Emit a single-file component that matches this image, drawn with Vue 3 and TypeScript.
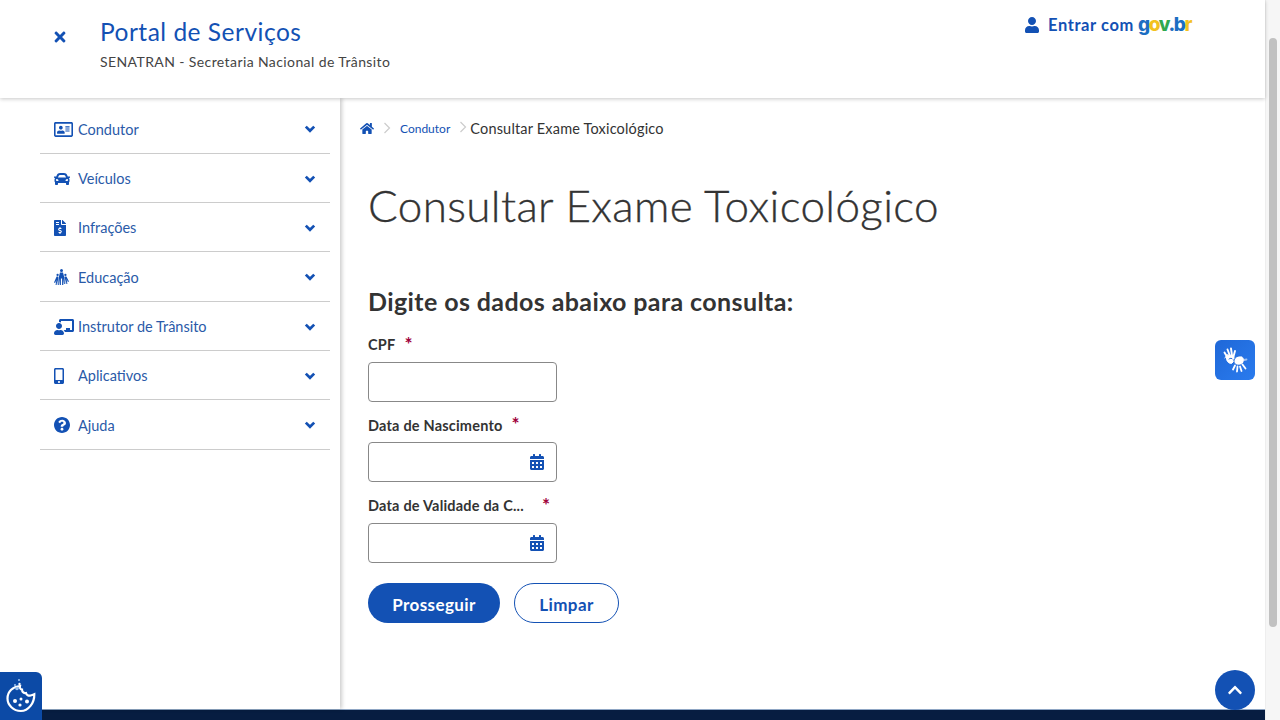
<script setup lang="ts">
interface NavItem { label: string; vb: string; w: number; h: number; d: string }

const calendar = 'M0 464c0 26.5 21.5 48 48 48h352c26.5 0 48-21.5 48-48V192H0v272zm320-196c0-6.6 5.4-12 12-12h40c6.6 0 12 5.4 12 12v40c0 6.6-5.4 12-12 12h-40c-6.6 0-12-5.4-12-12v-40zm0 128c0-6.6 5.4-12 12-12h40c6.6 0 12 5.4 12 12v40c0 6.6-5.4 12-12 12h-40c-6.6 0-12-5.4-12-12v-40zM192 268c0-6.6 5.4-12 12-12h40c6.6 0 12 5.4 12 12v40c0 6.6-5.4 12-12 12h-40c-6.6 0-12-5.4-12-12v-40zm0 128c0-6.6 5.4-12 12-12h40c6.6 0 12 5.4 12 12v40c0 6.6-5.4 12-12 12h-40c-6.6 0-12-5.4-12-12v-40zM64 268c0-6.6 5.4-12 12-12h40c6.6 0 12 5.4 12 12v40c0 6.6-5.4 12-12 12H76c-6.6 0-12-5.4-12-12v-40zm0 128c0-6.6 5.4-12 12-12h40c6.6 0 12 5.4 12 12v40c0 6.6-5.4 12-12 12H76c-6.6 0-12-5.4-12-12v-40zM400 64h-48V16c0-8.8-7.2-16-16-16h-32c-8.8 0-16 7.2-16 16v48H160V16c0-8.8-7.2-16-16-16h-32c-8.8 0-16 7.2-16 16v48H48C21.5 64 0 85.5 0 112v48h448v-48c0-26.5-21.5-48-48-48z'

const items: NavItem[] = [
  { label: 'Condutor', vb: '0 0 576 448', w: 19, h: 15, d: 'M528 0H48C21.5 0 0 21.5 0 48v352c0 26.5 21.5 48 48 48h480c26.5 0 48-21.5 48-48V48c0-26.5-21.5-48-48-48zm0 400H48V48h480v352zM208 224c30.9 0 56-25.1 56-56s-25.1-56-56-56-56 25.1-56 56 25.1 56 56 56zm-96 128h192c11 0 20-8 20-18v-20c0-33-31-60-70-60-12 0-20 8-46 8s-34-8-46-8c-39 0-70 27-70 60v20c0 10 9 18 20 18zm240-64h112c4 0 8-4 8-8v-16c0-4-4-8-8-8H352c-4 0-8 4-8 8v16c0 4 4 8 8 8zm0-64h112c4 0 8-4 8-8v-16c0-4-4-8-8-8H352c-4 0-8 4-8 8v16c0 4 4 8 8 8zm0-64h112c4 0 8-4 8-8v-16c0-4-4-8-8-8H352c-4 0-8 4-8 8v16c0 4 4 8 8 8z' },
  { label: 'Veículos', vb: '0 64 512 384', w: 16, h: 12, d: 'M499.99 176h-59.87l-16.64-41.6C406.38 91.63 365.57 64 319.5 64h-127c-46.06 0-86.88 27.63-103.99 70.4L71.87 176H12.01C4.2 176-1.53 183.34.37 190.91l6 24C7.7 220.25 12.5 224 18.01 224h20.07C24.65 235.73 16 252.78 16 272v48c0 16.12 6.16 30.67 16 41.93V416c0 17.67 14.33 32 32 32h32c17.67 0 32-14.33 32-32v-32h256v32c0 17.67 14.33 32 32 32h32c17.67 0 32-14.33 32-32v-54.07c9.84-11.25 16-25.8 16-41.93v-48c0-19.22-8.65-36.27-22.07-48H494c5.51 0 10.31-3.75 11.64-9.09l6-24c1.89-7.57-3.84-14.91-11.65-14.91zm-352.06-17.83c7.29-18.22 24.94-30.17 44.57-30.17h127c19.63 0 37.28 11.95 44.57 30.17L384 208H128l19.93-49.83zM96 319.8c-19.2 0-32-12.76-32-31.9S76.8 256 96 256s48 28.71 48 47.85-28.8 15.95-48 15.95zm320 0c-19.2 0-48 3.19-48-15.95S396.8 256 416 256s32 12.76 32 31.9-12.8 31.9-32 31.9z' },
  { label: 'Infrações', vb: '0 0 384 512', w: 12, h: 16, d: 'M377 105L279.1 7c-4.5-4.5-10.6-7-17-7H256v128h128v-6.1c0-6.3-2.5-12.4-7-16.9zm-153 31V0H24C10.7 0 0 10.7 0 24v464c0 13.3 10.7 24 24 24h336c13.3 0 24-10.7 24-24V160H248c-13.2 0-24-10.8-24-24zM64 72c0-4.42 3.58-8 8-8h80c4.42 0 8 3.58 8 8v16c0 4.42-3.58 8-8 8H72c-4.42 0-8-3.58-8-8V72zm0 80v-16c0-4.42 3.58-8 8-8h80c4.42 0 8 3.58 8 8v16c0 4.42-3.58 8-8 8H72c-4.42 0-8-3.58-8-8zm144 263.88V440c0 4.42-3.58 8-8 8h-16c-4.42 0-8-3.58-8-8v-24.29c-11.29-.58-22.27-4.52-31.37-11.35-3.9-2.93-4.1-8.77-.57-12.14l11.75-11.21c2.77-2.64 6.89-2.76 10.13-.73 3.87 2.42 8.26 3.72 12.82 3.72h28.11c6.5 0 11.8-5.92 11.8-13.19 0-5.95-3.61-11.19-8.77-12.73l-45-13.5c-18.59-5.58-31.58-23.42-31.58-43.39 0-24.52 19.05-44.44 42.67-45.07V232c0-4.42 3.58-8 8-8h16c4.42 0 8 3.58 8 8v24.29c11.29.58 22.27 4.51 31.37 11.35 3.9 2.93 4.1 8.77.57 12.14l-11.75 11.21c-2.77 2.64-6.89 2.76-10.13.73-3.87-2.43-8.26-3.72-12.82-3.72h-28.11c-6.5 0-11.8 5.92-11.8 13.19 0 5.95 3.61 11.19 8.77 12.73l45 13.5c18.59 5.58 31.58 23.42 31.58 43.39 0 24.53-19.05 44.44-42.67 45.07z' },
  { label: 'Educação', vb: '0 0 15 16', w: 15, h: 16, d: 'M7.500 0a1.500 1.500 0 1 1 0 3 1.500 1.500 0 0 1 0-3zM6 3.500h3l1.200 4.500-1 8H8.100V9.500h-1.200V16H5.800l-1-8zM3.600 4.800a1.150 1.150 0 1 1 0 2.300 1.150 1.150 0 0 1 0-2.300zM2.600 7.500h1.500L4.500 9l.3 7h-1l-.4-5-.8 5H1.600l.8-5-1.300 3-1.100-.5zM11.400 4.800a1.150 1.150 0 1 1 0 2.300 1.150 1.150 0 0 1 0-2.300zM10.900 7.500h1.500l2.600 5-1.100.5-1.300-3 .8 5h-1l-.8-5-.4 5h-1l.3-7z' },
  { label: 'Instrutor de Trânsito', vb: '0 0 640 512', w: 20, h: 16, d: 'M208 352c-2.39 0-4.78.35-7.06 1.09C187.98 357.3 174.35 360 160 360c-14.35 0-27.98-2.7-40.95-6.91-2.28-.74-4.66-1.09-7.05-1.09C49.94 352-.33 402.48 0 464.62.14 490.88 21.73 512 48 512h224c26.27 0 47.86-21.12 48-47.38.33-62.14-49.94-112.62-112-112.62zm-48-32c53.02 0 96-42.98 96-96s-42.98-96-96-96-96 42.98-96 96 42.98 96 96 96zM592 0H208c-26.47 0-48 22.25-48 49.59V96c23.42 0 45.1 6.78 64 17.8V64h352v288h-64v-64H384v64h-76.24c19.1 16.69 33.12 38.73 39.69 64H592c26.47 0 48-22.25 48-49.59V49.59C640 22.25 618.47 0 592 0z' },
  { label: 'Aplicativos', vb: '0 0 320 512', w: 10, h: 16, d: 'M272 0H48C21.5 0 0 21.5 0 48v416c0 26.5 21.5 48 48 48h224c26.5 0 48-21.5 48-48V48c0-26.5-21.5-48-48-48zM160 480c-17.7 0-32-14.3-32-32s14.3-32 32-32 32 14.3 32 32-14.3 32-32 32zm112-108c0 6.6-5.4 12-12 12H60c-6.6 0-12-5.4-12-12V60c0-6.6 5.4-12 12-12h200c6.6 0 12 5.4 12 12v312z' },
  { label: 'Ajuda', vb: '8 8 496 496', w: 16, h: 16, d: 'M504 256c0 136.997-111.043 248-248 248S8 392.997 8 256C8 119.083 119.043 8 256 8s248 111.083 248 248zM262.655 90c-54.497 0-89.255 22.957-116.549 63.758-3.536 5.286-2.353 12.415 2.715 16.258l34.699 26.31c5.205 3.947 12.621 3.008 16.665-2.122 17.864-22.658 30.113-35.797 57.303-35.797 20.429 0 45.698 13.148 45.698 32.958 0 14.976-12.363 22.667-32.534 33.976C247.128 238.528 216 254.941 216 296v4c0 6.627 5.373 12 12 12h56c6.627 0 12-5.373 12-12v-1.333c0-28.462 83.186-29.647 83.186-106.667 0-58.002-60.165-102-116.531-102zM256 338c-25.365 0-46 20.635-46 46 0 25.364 20.635 46 46 46s46-20.636 46-46c0-25.365-20.635-46-46-46z' }
]
</script>

<template>
  <div class="page">
    <div class="viewport">
      <header class="top">
        <button class="close" aria-label="Fechar">
          <svg width="12" height="16" viewBox="0 0 352 512"><path fill="#1351b4" d="M242.72 256l100.07-100.07c12.28-12.28 12.28-32.19 0-44.48l-22.24-22.24c-12.28-12.28-32.19-12.28-44.48 0L176 189.28 75.93 89.21c-12.28-12.28-32.19-12.28-44.48 0L9.21 111.45c-12.28 12.28-12.28 32.19 0 44.48L109.28 256 9.21 356.07c-12.28 12.28-12.28 32.19 0 44.48l22.24 22.24c12.28 12.28 32.2 12.28 44.48 0L176 322.72l100.07 100.07c12.28 12.28 32.2 12.28 44.48 0l22.24-22.24c12.28-12.28 12.28-32.19 0-44.48L242.72 256z"/></svg>
        </button>
        <div class="brand">
          <div class="brand-title">Portal de Serviços</div>
          <div class="brand-sub">SENATRAN - Secretaria Nacional de Trânsito</div>
        </div>
        <div class="login">
          <svg width="14" height="16" viewBox="0 0 448 512"><path fill="#1351b4" d="M224 256c70.7 0 128-57.3 128-128S294.7 0 224 0 96 57.3 96 128s57.3 128 128 128zm89.6 32h-16.7c-22.2 10.2-46.9 16-72.9 16s-50.6-5.8-72.9-16h-16.7C60.2 288 0 348.2 0 422.4V464c0 26.5 21.5 48 48 48h352c26.5 0 48-21.5 48-48v-41.6c0-74.2-60.2-134.4-134.4-134.4z"/></svg>
          <span class="login-text">Entrar com</span>
          <span class="gov"><i class="g1">g</i><i class="g2">o</i><i class="g3">v</i><i class="g1">.</i><i class="g1">b</i><i class="g2">r</i></span>
        </div>
      </header>

      <div class="body">
        <aside class="side">
          <nav>
            <a v-for="it in items" :key="it.label" class="nav-row">
              <span class="nav-icon">
                <svg :width="it.w" :height="it.h" :viewBox="it.vb"><path fill="#1351b4" :d="it.d"/></svg>
              </span>
              <span class="nav-label">{{ it.label }}</span>
              <svg class="chev" width="12" height="8" viewBox="0 0 12 8"><path d="M1.800 1.600L6 5.800l4.200-4.200" fill="none" stroke="#1351b4" stroke-width="2.700"/></svg>
            </a>
          </nav>
        </aside>

        <main class="main">
          <div class="crumbs">
            <svg width="14" height="13" viewBox="0 0 576 512"><path fill="#1351b4" d="M280.37 148.26L96 300.11V464a16 16 0 0 0 16 16l112.06-.29a16 16 0 0 0 15.92-16V368a16 16 0 0 1 16-16h64a16 16 0 0 1 16 16v95.64a16 16 0 0 0 16 16.05L464 480a16 16 0 0 0 16-16V300L295.67 148.26a12.19 12.19 0 0 0-15.3 0zM571.6 251.47L488 182.56V44.05a12 12 0 0 0-12-12h-56a12 12 0 0 0-12 12v72.61L318.47 43a48 48 0 0 0-61 0L4.34 251.47a12 12 0 0 0-1.6 16.9l25.5 31A12 12 0 0 0 45.15 301l235.22-193.74a12.19 12.19 0 0 1 15.3 0L530.9 301a12 12 0 0 0 16.9-1.6l25.5-31a12 12 0 0 0-1.7-16.93z"/></svg>
            <svg class="sep" width="8" height="12" viewBox="0 0 8 12"><path d="M1.500 1l5 5-5 5" fill="none" stroke="#ccc" stroke-width="1.200"/></svg>
            <span class="crumb-link">Condutor</span>
            <svg class="sep2" width="8" height="12" viewBox="0 0 8 12"><path d="M1.500 1l5 5-5 5" fill="none" stroke="#ccc" stroke-width="1.200"/></svg>
            <span class="crumb-cur">Consultar Exame Toxicológico</span>
          </div>

          <h1>Consultar Exame Toxicológico</h1>
          <h2>Digite os dados abaixo para consulta:</h2>

          <form class="form" @submit.prevent>
            <div class="field">
              <div class="label-row"><label class="lbl">CPF</label><span class="req req-cpf">*</span></div>
              <div class="input"></div>
            </div>
            <div class="field">
              <div class="label-row"><label class="lbl">Data de Nascimento</label><span class="req req-nasc">*</span></div>
              <div class="input">
                <svg width="14" height="16" viewBox="0 0 448 512"><path fill="#1351b4" :d="calendar"/></svg>
              </div>
            </div>
            <div class="field">
              <div class="label-row"><label class="lbl">Data de Validade da C...</label><span class="req req-val">*</span></div>
              <div class="input">
                <svg width="14" height="16" viewBox="0 0 448 512"><path fill="#1351b4" :d="calendar"/></svg>
              </div>
            </div>
            <div class="actions">
              <button class="btn primary" type="submit">Prosseguir</button>
              <button class="btn ghost" type="button">Limpar</button>
            </div>
          </form>
        </main>
      </div>

      <footer class="foot"></footer>

      <button class="libras" aria-label="Libras">
        <svg width="26" height="28" viewBox="0 0 26 28" fill="none" stroke="#fff" stroke-linecap="round">
          <path d="M2.500 6.500l3 5M5.500 3.500l2.500 6.500M9 2.500l1 7M13 5l-1.500 5.500" stroke-width="1.900"/>
          <path d="M4.500 11c-.5 3.500 1.500 6.500 5 6.500l3-3-1-5-6-.5z" fill="#fff" stroke-width="1"/>
          <path d="M5 8.500L3 12" stroke-width="1"/>
          <path d="M7 13c1-1 3-1 3.500 0" stroke="#1f68d8" stroke-width="1"/>
          <path d="M12 14c1-3 4-4.500 7.500-4l2.500 2c1 3.500-1 6.500-4.500 7-3 .5-6-1-5.500-5z" fill="#fff" stroke="#1f68d8" stroke-width=".8"/>
          <path d="M13 19.500l-2 4M15.500 20.500l-.5 5M18 20.500l1.500 4.500M20.500 18.500l3 4" stroke-width="1.800"/>
          <path d="M22 14l2.500-.5" stroke-width="1.800" stroke-opacity=".55"/>
        </svg>
      </button>

      <button class="cookie" aria-label="Cookies">
        <svg width="30" height="36" viewBox="0 0 30 36" fill="none">
          <path d="M14 8c-.5 2 .5 3.500 2 3.500 0 2.500 2 4 4 3.500.5 2 2.500 3 4.500 2.500 1.500-.3 2.500-.7 3.800-1.300C28.500 25 22.500 33 14.800 33 7.500 33 1.500 27 1.500 20.500 1.500 13.500 7 8.500 14 8z" stroke="#fff" stroke-width="2.200"/>
          <circle cx="9" cy="23" r="2" fill="#fff"/><circle cx="15" cy="21" r="1.500" fill="#fff"/><circle cx="21" cy="23.500" r="2" fill="#fff"/><circle cx="14" cy="27" r="1.600" fill="#fff"/>
          <circle cx="11" cy="10.500" r="1.800" fill="#9fc4f0"/><circle cx="13.500" cy="6" r="1.200" fill="#fff"/><circle cx="9" cy="7" r="1" fill="#9fc4f0"/><circle cx="13" cy="2" r="1" fill="#9fc4f0"/>
        </svg>
      </button>

      <button class="totop" aria-label="Topo">
        <svg width="14" height="16" viewBox="0 0 448 512"><path fill="#fff" d="M240.971 130.524l194.343 194.343c9.373 9.373 9.373 24.569 0 33.941l-22.667 22.667c-9.357 9.357-24.522 9.375-33.901.04L224 227.495 69.255 381.516c-9.379 9.335-24.544 9.317-33.901-.04l-22.667-22.667c-9.373-9.373-9.373-24.569 0-33.941L207.03 130.525c9.372-9.373 24.568-9.373 33.941-.001z"/></svg>
      </button>
    </div>

    <div class="scrollbar"><div class="thumb"></div></div>
  </div>
</template>

<style>
html, body { margin: 0; padding: 0; overflow: hidden; background: #fff; }
</style>

<style scoped>
.page { display: flex; height: 720px; width: 1280px; overflow: hidden; font-family: Lato, "Open Sans", sans-serif; color: #333; }
.viewport { position: relative; flex: 1; min-width: 0; display: flex; flex-direction: column; }
.scrollbar { width: 15px; background: #f6f6f6; border-left: 1px solid #eee; box-sizing: border-box; padding: 38px 3px 0 3px; }
.thumb { height: 589px; background: #c1c1c1; border-radius: 5px; }

.top { position: relative; z-index: 2; height: 98px; flex: none; background: #fff; box-shadow: 0 1px 4px rgba(0,0,0,.22); display: flex; align-items: flex-start; box-sizing: border-box; padding-left: 54px; }
.close { border: 0; background: none; padding: 0; width: 46px; margin-top: 29px; text-align: left; height: 16px; line-height: 16px; }
.brand { padding-top: 16px; }
.brand-title { font-size: 24.500px; line-height: 32px; color: #1351b4; letter-spacing: .5px; }
.brand-sub { font-size: 14px; line-height: 20px; margin-top: 4px; color: #444; letter-spacing: .4px; }
.login { margin-left: auto; margin-right: 74px; margin-top: 13px; display: flex; align-items: center; height: 24px; }
.login-text { font-size: 16.500px; font-weight: 700; color: #1351b4; margin-left: 9px; white-space: nowrap; letter-spacing: .6px; }
.gov { font-family: Inter, Lato, sans-serif; font-size: 19px; font-weight: 800; margin-left: 4px; letter-spacing: -1.400px; position: relative; top: -1px; }
.gov i { font-style: normal; }
.g1 { color: #1b6ec2; }
.g2 { color: #f3c21f; }
.g3 { color: #2fa84f; }

.body { flex: 1; min-height: 0; display: flex; }
.side { position: relative; z-index: 1; width: 340px; flex: none; box-sizing: border-box; padding: 6.500px 10px 0 40px; box-shadow: 2px 0 4px rgba(0,0,0,.2); background: #fff; }
.nav-row { display: flex; align-items: center; height: 49.300px; box-sizing: border-box; border-bottom: 1px solid #ccc; padding: 1.500px 14px 0 14px; color: #1351b4; font-size: 14.500px; }
.nav-icon { width: 24px; flex: none; display: flex; align-items: center; }
.nav-label { flex: 1; color: #2a5aa8; }
.chev { flex: none; }

.main { flex: 1; min-width: 0; padding-left: 20px; }
.crumbs { display: flex; align-items: center; height: 60px; font-size: 14.500px; }
.sep { margin: 0 9px 0 9px; }
.crumb-link { font-size: 12px; color: #1351b4; }
.sep2 { margin: 0 3px 0 9px; position: relative; top: -1px; }
.crumb-cur { color: #333; letter-spacing: .18px; }
h1 { margin: 0 0 0 8px; padding-top: 17px; font-weight: 300; font-size: 44px; line-height: 60px; color: #333; letter-spacing: .38px; -webkit-text-stroke: .35px #333; white-space: nowrap; }
h2 { margin: 50px 0 0 8px; font-weight: 700; font-size: 25px; line-height: 32px; color: #333; letter-spacing: .4px; }
.form { margin: 4.300px 0 0 8px; width: 190px; }
.field { height: 80.500px; }
.label-row { height: 40.500px; display: flex; align-items: center; position: relative; }
.lbl { font-size: 14.500px; font-weight: 700; color: #333; white-space: nowrap; position: relative; top: 3px; letter-spacing: .2px; }
.req { color: #a0003a; font-size: 19px; line-height: 20px; font-weight: 700; position: relative; top: 2px; }
.req-cpf { margin-left: 9px; }
.req-nasc { margin-left: 9px; }
.req-val { margin-left: 18px; }
.input { box-sizing: border-box; height: 40px; width: 189px; border: 1px solid #888; border-radius: 4px; background: #fff; display: flex; align-items: center; justify-content: flex-end; padding-right: 12px; }
.actions { display: flex; gap: 14px; margin-top: 20px; }
.btn { height: 40px; border-radius: 20px; font-family: inherit; font-weight: 700; font-size: 17px; letter-spacing: .4px; white-space: nowrap; box-sizing: border-box; padding: 3px 0 0 0; }
.primary { width: 132px; background: #1351b4; color: #fff; border: 0; flex: none; }
.ghost { width: 105px; background: #fff; color: #1351b4; border: 1px solid #1351b4; flex: none; }

.foot { height: 11px; flex: none; background: #071d41; border-top: 1px solid #8fa6c4; box-sizing: border-box; }
.libras, .cookie, .totop { z-index: 3; }
.libras { position: absolute; left: 1215px; top: 340px; width: 40px; height: 40px; border: 0; border-radius: 6px; padding: 0; background: linear-gradient(135deg, #1f68d8, #2a7bee); display: flex; align-items: center; justify-content: center; }
.cookie { position: absolute; left: 0; top: 672px; width: 42px; height: 48px; border: 0; padding: 0; border-radius: 0 6px 0 0; background: #0c4aa6; display: flex; align-items: center; justify-content: center; }
.totop { position: absolute; left: 1215px; top: 670px; width: 40px; height: 40px; border: 0; border-radius: 50%; padding: 0; background: #1351b4; display: flex; align-items: center; justify-content: center; }
</style>
